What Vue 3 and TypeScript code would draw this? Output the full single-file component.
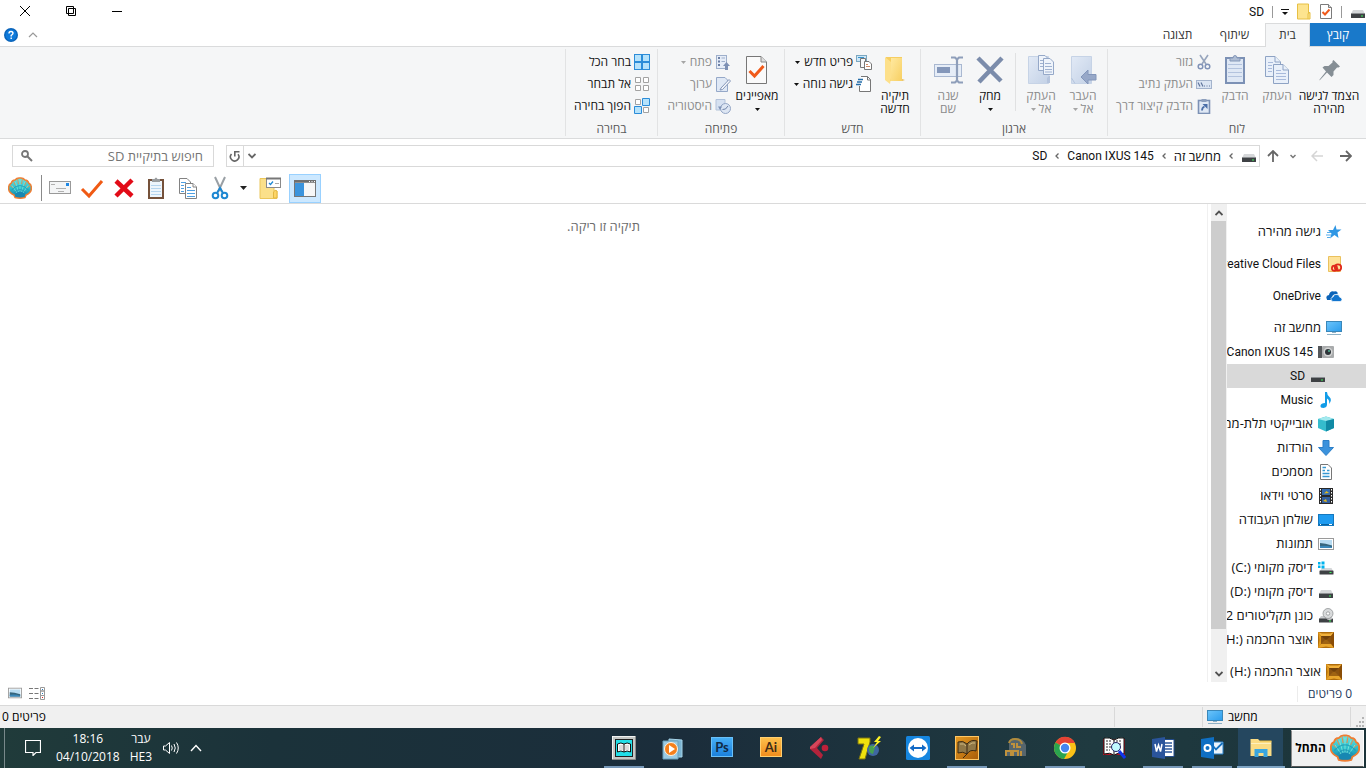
<script setup lang="ts">
import { ref } from 'vue'

interface Cmd {
  label: string
  icon: string
  disabled?: boolean
  arrow?: boolean
  lines?: string[]
  wide?: boolean
  sepAfter?: boolean
}
interface Group {
  name: string
  title: string
  big: Cmd[]
  small: Cmd[]
}

const groups: Group[] = [
  {
    name: 'clipboard',
    title: 'לוח',
    big: [
      { label: 'pin', icon: 'pin', lines: ['הצמד לגישה', 'מהירה'], wide: true },
      { label: 'copy', icon: 'copy-dim', lines: ['העתק'], disabled: true },
      { label: 'paste', icon: 'paste-dim', lines: ['הדבק'], disabled: true },
    ],
    small: [
      { label: 'גזור', icon: 'cut-dim', disabled: true },
      { label: 'העתק נתיב', icon: 'path', disabled: true },
      { label: 'הדבק קיצור דרך', icon: 'shortcut', disabled: true },
    ],
  },
  {
    name: 'organize',
    title: 'ארגון',
    big: [
      { label: 'move', icon: 'moveto', lines: ['העבר', 'אל'], disabled: true, arrow: true },
      { label: 'copyto', icon: 'copyto', lines: ['העתק', 'אל'], disabled: true, arrow: true, sepAfter: true },
      { label: 'delete', icon: 'delete', lines: ['מחק', ''], arrow: true },
      { label: 'rename', icon: 'rename', lines: ['שנה', 'שם'], disabled: true },
    ],
    small: [],
  },
  {
    name: 'new',
    title: 'חדש',
    big: [{ label: 'folder', icon: 'newfolder', lines: ['תיקיה', 'חדשה'] }],
    small: [
      { label: 'פריט חדש', icon: 'newitem', arrow: true },
      { label: 'גישה נוחה', icon: 'easy', arrow: true },
    ],
  },
  {
    name: 'open',
    title: 'פתיחה',
    big: [{ label: 'properties', icon: 'props', lines: ['מאפיינים', ''], arrow: true }],
    small: [
      { label: 'פתח', icon: 'open', disabled: true, arrow: true },
      { label: 'ערוך', icon: 'edit', disabled: true },
      { label: 'היסטוריה', icon: 'history', disabled: true },
    ],
  },
  {
    name: 'select',
    title: 'בחירה',
    big: [],
    small: [
      { label: 'בחר הכל', icon: 'selall' },
      { label: 'אל תבחר', icon: 'selnone' },
      { label: 'הפוך בחירה', icon: 'selinv' },
    ],
  },
]

const drive = (letter: string) => `\u200e(${letter}:)\u200e`

const tree = [
  { label: 'גישה מהירה', icon: 'star', level: 0 },
  { label: 'Creative Cloud Files', icon: 'ccfolder', level: 0, latin: true },
  { label: 'OneDrive', icon: 'onedrive', level: 0, latin: true },
  { label: 'מחשב זה', icon: 'pc', level: 0 },
  { label: 'Canon IXUS 145', icon: 'camera', level: 1, latin: true },
  { label: 'SD', icon: 'drive', level: 2, latin: true },
  { label: 'Music', icon: 'music', level: 1, latin: true },
  { label: 'אובייקטי תלת-ממד', icon: 'cube', level: 1 },
  { label: 'הורדות', icon: 'download', level: 1 },
  { label: 'מסמכים', icon: 'docs', level: 1 },
  { label: 'סרטי וידאו', icon: 'video', level: 1 },
  { label: 'שולחן העבודה', icon: 'desktop', level: 1 },
  { label: 'תמונות', icon: 'picture', level: 1 },
  { label: 'דיסק מקומי ' + drive('C'), icon: 'windrive', level: 1 },
  { label: 'דיסק מקומי ' + drive('D'), icon: 'drive', level: 1 },
  { label: 'כונן תקליטורים 2', icon: 'cd', level: 1 },
  { label: 'אוצר החכמה ' + drive('H'), icon: 'gem', level: 1 },
  { label: 'אוצר החכמה ' + drive('H'), icon: 'gem', level: 0 },
]
const selected = ref(5)

const tools = [
  { icon: 'mail', name: 'דואר' },
  { icon: 'check', name: 'מאפיינים' },
  { icon: 'redx', name: 'מחק' },
  { icon: 'paste', name: 'הדבק' },
  { icon: 'copy', name: 'העתק' },
  { icon: 'cut', name: 'גזור' },
]

const apps = [
  { icon: 'explorer', name: 'Explorer', open: true, active: true },
  { icon: 'outlook', name: 'Outlook', open: true },
  { icon: 'word', name: 'Word', open: true },
  { icon: 'findbook', name: 'חיפוש ספרים' },
  { icon: 'chrome', name: 'Chrome', open: true },
  { icon: 'arch', name: 'אוצר' },
  { icon: 'goldbook', name: 'ספר', open: true },
  { icon: 'teamviewer', name: 'TeamViewer' },
  { icon: 'seven', name: '7' },
  { icon: 'cubase', name: 'Cubase' },
  { icon: 'ai', name: 'Illustrator' },
  { icon: 'ps', name: 'Photoshop' },
  { icon: 'media', name: 'Media Player' },
  { icon: 'book', name: 'ספרייה', open: true },
]
const query = ref('')
</script>

<template>
  <div class="window" dir="rtl">
    <svg class="defs" width="0" height="0" aria-hidden="true">
      <defs>
        <linearGradient id="g-shell" x1="0" y1="0" x2="0" y2="1"><stop offset="0" stop-color="#6fe3e0" /><stop offset=".5" stop-color="#2cbfcb" /><stop offset="1" stop-color="#1279a8" /></linearGradient>
        <linearGradient id="g-fold" x1="0" y1="0" x2="1" y2="1"><stop offset="0" stop-color="#ffe9a0" /><stop offset="1" stop-color="#f7cf62" /></linearGradient>
        <linearGradient id="g-scr" x1="0" y1="0" x2="1" y2="1"><stop offset="0" stop-color="#6cc5fb" /><stop offset="1" stop-color="#2b9cec" /></linearGradient>
        <linearGradient id="g-dim" x1="0" y1="0" x2="1" y2="1"><stop offset="0" stop-color="#e2eaf6" /><stop offset="1" stop-color="#c3d1e6" /></linearGradient>
        <linearGradient id="g-ps" x1="0" y1="0" x2="0" y2="1"><stop offset="0" stop-color="#47b0f6" /><stop offset="1" stop-color="#1a7fdc" /></linearGradient>
        <linearGradient id="g-ai" x1="0" y1="0" x2="0" y2="1"><stop offset="0" stop-color="#fdc04c" /><stop offset="1" stop-color="#f08c1c" /></linearGradient>
        <linearGradient id="g-gold" x1="0" y1="0" x2="1" y2="1"><stop offset="0" stop-color="#e59a22" /><stop offset="1" stop-color="#a85c08" /></linearGradient>
      </defs>
      <symbol id="i-shell" viewBox="0 0 24 22">
        <path d="M6 18Q0 15 .8 11Q.3 7.500 3.200 6.300Q4 3 7 3Q9 .5 12 1Q15 .5 17 3Q20 3 20.800 6.300Q23.700 7.500 23.200 11Q24 15 18 18L17 20.500Q12 22 7 20.500Z" fill="url(#g-shell)" stroke="#ee7d32" stroke-width="1.500" />
        <path d="M9.500 1.500L10.500 7M14.500 1.500L13.500 7M5 3.500L7.500 8.500M19 3.500L16.500 8.500M1.500 8L5.500 11M22.500 8L18.500 11" stroke="#f08a44" stroke-width=".8" fill="none" />
        <path d="M12 15V3M10.500 15L7.500 5M13.500 15L16.500 5M9 16L4 8.500M15 16L20 8.500" stroke="#8cebe0" stroke-width=".6" fill="none" />
        <path d="M3.500 13Q12 4 20.500 13M6 16Q12 9 18 16" stroke="#1b93b0" fill="none" opacity=".7" />
        <path d="M7 17Q12 12 17 17L16 20H8Z" fill="#1787b2" />
      </symbol>
      <symbol id="i-drive" viewBox="0 0 16 16"><path d="M3 6H13L15 10H1Z" fill="#d5d7d9" /><rect x="1" y="9.500" width="14" height="4.500" rx=".6" fill="#3e4144" /><path d="M1 9.500H15" stroke="#8d9093" /><rect x="11" y="11.500" width="2" height="1" fill="#3df25a" /></symbol>
      <symbol id="i-windrive" viewBox="0 0 16 16"><path d="M4 8H13.500L15 11H2Z" fill="#d5d7d9" /><rect x="1.500" y="10.500" width="14" height="4" rx=".6" fill="#3e4144" /><rect x="11.500" y="12" width="2" height="1" fill="#3df25a" /><path d="M0 2H2.500V4.500H0ZM3.500 1.500H6.500V4.500H3.500ZM0 5.500H2.500V8H0ZM3.500 5.500H6.500V8.500H3.500Z" fill="#00b3ee" /></symbol>
      <symbol id="i-cd" viewBox="0 0 16 16"><path d="M3 8H13L15 11H1Z" fill="#c9cbcd" /><circle cx="10" cy="5.500" r="5" fill="#d9dbdc" stroke="#85888a" stroke-width=".7" /><circle cx="10" cy="5.500" r="1.700" fill="#fff" stroke="#85888a" stroke-width=".7" /><path d="M1 10.500H8Q11 13 15 10.500V14.500H1Z" fill="#3e4144" /><rect x="11" y="12.500" width="2" height="1" fill="#3df25a" /></symbol>
      <symbol id="i-qdoc" viewBox="0 0 14 17"><path d="M1.500 1.500H9.500L12.500 4.500V15.500H1.500Z" fill="#fff" stroke="#7b7b7b" /><path d="M9.500 1.500V4.500H12.500" fill="#ddd" stroke="#7b7b7b" /><path d="M3.500 9L6 11.500L10.500 6.500" fill="none" stroke="#f05a1a" stroke-width="2" /></symbol>
      <symbol id="i-qfolder" viewBox="0 0 14 17"><path d="M.5 1H11.500V10L13 9.500V16H.5Z" fill="#fde48f" stroke="#e7c044" /><path d="M11 16V11Q11 9.500 13 9.500" fill="none" stroke="#e7c044" /></symbol>
      <symbol id="i-pin" viewBox="0 0 32 32"><path d="M20.500 6L27 12.500L25.500 13.500L24 13.500L20.500 17.500L20.500 21L18.500 23L14 18.500L7.500 25.500L6 26.500L7 25L13 17.500L9.500 13.500L11.500 12L15.500 12L19.500 8.500L19.500 7Z" fill="#858e95" /></symbol>
      <symbol id="i-copy-dim" viewBox="0 0 32 32"><g stroke="#8ea3c4" fill="#e9f0fa"><path d="M4.500 2.500H14L19.500 8V22.500H4.500Z" /><path d="M14 2.500V8H19.500" /><path d="M12.500 10.500H22L27.500 16V29.500H12.500Z" /><path d="M22 10.500V16H27.500" /></g><path d="M7 8.500H12M7 11.500H11M7 14.500H11M7 17.500H11M15 16.500H20M15 19.500H25M15 22.500H25M15 25.500H25" stroke="#a8badb" /></symbol>
      <symbol id="i-paste-dim" viewBox="0 0 32 32"><rect x="7" y="4" width="18" height="25" fill="#dfe8f5" stroke="#7c91b5" stroke-width="2" /><path d="M9 10.500H23M9 14.500H23M9 18.500H23M9 22.500H23" stroke="#b3c3de" /><path d="M11 4H14Q14 1.500 16 1.500T18 4H21V7H11Z" fill="#aebdd4" stroke="#8497b8" /></symbol>
      <symbol id="i-cut-dim" viewBox="0 0 16 16"><path d="M4 1L10 10M12 1L6 10" stroke="#97a5bd" stroke-width="1.600" /><circle cx="4.500" cy="12.500" r="2.300" fill="none" stroke="#8093b8" stroke-width="1.500" /><circle cx="11.500" cy="12.500" r="2.300" fill="none" stroke="#8093b8" stroke-width="1.500" /></symbol>
      <symbol id="i-path" viewBox="0 0 16 16"><rect x=".5" y="4.500" width="15" height="8" fill="#dbe5f3" stroke="#a3b3cc" /><path d="M2 6.500L4 10.500M5 6.500L7 10.500" stroke="#5f759c" stroke-width="1.200" /><path d="M8 10H9M10.500 10H11.500M13 10H14" stroke="#5f759c" /></symbol>
      <symbol id="i-shortcut" viewBox="0 0 16 16"><rect x="2.500" y="2.500" width="11" height="13" fill="#dfe8f5" stroke="#7c91b5" stroke-width="1.600" /><path d="M5.500 1H10.500V4H5.500Z" fill="#8d9fbd" /><path d="M6 12.500Q6 9.500 8.500 8.500" fill="none" stroke="#4a6ea8" stroke-width="1.800" /><path d="M6.500 6H11.500V11Z" fill="#4a6ea8" /></symbol>
      <symbol id="i-moveto" viewBox="0 0 32 32"><path d="M4.500 2.500H24.500V29.500H4.500Z" fill="url(#g-dim)" stroke="#c6d3e6" /><path d="M4.500 24L8 29.500" stroke="#b3c3dc" /><path d="M14 23L21 16V20.500H29V26H21V30Z" fill="#97a8c8" stroke="#8396ba" /></symbol>
      <symbol id="i-copyto" viewBox="0 0 32 32"><path d="M3.500 2.500H23.500V29.500H3.500Z" fill="url(#g-dim)" stroke="#c6d3e6" /><g fill="#eff4fb" stroke="#95a8c8"><path d="M13.500 1.500H20L23.500 5V16.500H13.500Z" /><path d="M18.500 4.500H25L28.500 8V20.500H18.500Z" /></g><path d="M15 6.500H18M15 9.500H18M15 12.500H18M20 9.500H26M20 12.500H27M20 15.500H27M20 18H27" stroke="#9fb1d0" /><path d="M22 24L25 21V29H22Z" fill="#b5c4dd" /></symbol>
      <symbol id="i-delete" viewBox="0 0 32 32"><path d="M4 4L27 27M28 4L5 28" stroke="#7b8cab" stroke-width="4.500" /></symbol>
      <symbol id="i-rename" viewBox="0 0 32 32"><rect x="2.500" y="10.500" width="27" height="12" fill="#e6edf7" stroke="#a9b8d1" /><rect x="5" y="13" width="13" height="6" fill="#8497ba" /><path d="M19 3.500H23L25 5.500V26.500L23 28.500H19M31 3.500H27L25 5.500M25 26.500L27 28.500H31" fill="none" stroke="#8e9eba" stroke-width="2.200" /></symbol>
      <symbol id="i-newfolder" viewBox="0 0 32 32"><path d="M7 3H23V27H7Z" fill="#f6ce62" /><path d="M12 4H23V27H12Z" fill="url(#g-fold)" /><path d="M6 3L12 8V24L11 30L6 26Z" fill="#fde08a" /><path d="M23 27L26 26L23 25Z" fill="#e8bd58" /></symbol>
      <symbol id="i-newitem" viewBox="0 0 16 16"><rect x=".5" y="1.500" width="10" height="6" fill="#cde7f8" stroke="#7ba7c0" /><path d="M2 3.500H8" stroke="#3893cc" /><path d="M4.500 4.500H9.500V13.500H4.500Z" fill="#f7f8f9" stroke="#777" /><path d="M8.500 7.500H13L15.500 10V15.500H8.500Z" fill="#fff" stroke="#777" /><path d="M10 10.500H12M10 12.500H14" stroke="#d18b67" /></symbol>
      <symbol id="i-easy" viewBox="0 0 16 16"><path d="M5 .5H11.500L14.500 3.500V15.500H3.500V10" fill="#fff" stroke="#777" /><path d="M11.500 .5V4H14.500" fill="none" stroke="#777" /><path d="M2 3.500H7M1 6H6M0 8.500H5" stroke="#256da9" stroke-width="1.400" /></symbol>
      <symbol id="i-props" viewBox="0 0 32 32"><path d="M5.500 2.500H20L25.500 8V29.500H5.500Z" fill="#fafafa" stroke="#777" /><path d="M20 2.500V8H25.500" fill="#ddd" stroke="#888" /><path d="M8.500 17L13.500 22L22.500 12" fill="none" stroke="#f05a1a" stroke-width="3" /></symbol>
      <symbol id="i-open" viewBox="0 0 16 16"><rect x="1.500" y="1.500" width="10" height="13" fill="#e6edf8" stroke="#9eafcb" /><path d="M3 4H5M3 7.500H5M3 11H5" stroke="#6c80a5" stroke-width="2" /><path d="M6.500 4H10M6.500 7.500H10" stroke="#9eafcb" /><path d="M8 12L11.500 8L15 12H13V16H10V12Z" fill="#7d90b4" /></symbol>
      <symbol id="i-edit" viewBox="0 0 16 16"><path d="M1.500 1.500H10L12.500 4V15.500H1.500Z" fill="#dfe8f5" stroke="#95a8c8" /><path d="M6 12L14 3.500L15.500 5L7.500 13.500L5 14Z" fill="#f5f7fb" stroke="#8496b8" /></symbol>
      <symbol id="i-history" viewBox="0 0 16 16"><path d="M1 1.500H10V12H1Z" fill="#d6e1f1" stroke="#b4c3da" /><circle cx="10.500" cy="10.500" r="5" fill="#dde6f3" stroke="#93a5c4" /><path d="M7.500 11.500L10.500 11L13 8" stroke="#6f83a8" fill="none" /><path d="M3 8.500H7L5 12Z" fill="#7f93b7" /></symbol>
      <symbol id="i-selall" viewBox="0 0 16 16"><rect width="16" height="16" fill="#2b8cd8" /><path d="M1 1H7V7H1ZM9 1H15V7H9ZM1 9H7V15H1ZM9 9H15V15H9Z" fill="#b5e2fb" /></symbol>
      <symbol id="i-selnone" viewBox="0 0 16 16"><path d="M1.500 1.500H6.500V6.500H1.500ZM9.500 1.500H14.500V6.500H9.500ZM1.500 9.500H6.500V14.500H1.500ZM9.500 9.500H14.500V14.500H9.500Z" fill="#fff" stroke="#a2a2a2" /></symbol>
      <symbol id="i-selinv" viewBox="0 0 16 16"><path d="M1.500 1.500H6.500V6.500H1.500ZM9.500 9.500H14.500V14.500H9.500Z" fill="#fff" stroke="#a2a2a2" /><path d="M8.500 .5H15.500V7.500H8.500ZM.5 8.500H7.500V15.500H.5Z" fill="#b5e2fb" stroke="#2b8cd8" /></symbol>
      <symbol id="i-mail" viewBox="0 0 24 24"><rect x="1.500" y="5.500" width="21" height="12" fill="#f4f5f6" stroke="#999" /><rect x="18" y="7" width="3" height="3" fill="#1e88e5" /><path d="M3 8.500H7M8 12.500H18M10 15.500H16" stroke="#b0b0b0" /></symbol>
      <symbol id="i-check" viewBox="0 0 24 24"><path d="M2 13L9 20L22 5" fill="none" stroke="#f05a14" stroke-width="3" /></symbol>
      <symbol id="i-redx" viewBox="0 0 24 24"><path d="M4 5L20 20M20 4L4 20" stroke="#e20b17" stroke-width="4.500" /></symbol>
      <symbol id="i-paste" viewBox="0 0 24 24"><rect x="5" y="4" width="14" height="18" fill="#eef5fb" stroke="#75513a" stroke-width="2" /><path d="M7 9.500H17M7 12.500H17M7 15.500H17M7 18.500H17" stroke="#b6d5ee" /><path d="M8 3H10.500Q12 0 13.500 3H16V6H8Z" fill="#9a9d9f" /></symbol>
      <symbol id="i-copy" viewBox="0 0 24 24"><g fill="#fff" stroke="#828282"><path d="M3.500 2.500H11L14.500 6V17.500H3.500Z" /><path d="M9.500 7.500H17L20.500 11V22.500H9.500Z" /><path d="M17 7.500V11H20.500" /></g><path d="M5 6.500H10M5 9.500H8M5 12.500H8M5 15.500H8M11 11.500H15M11 14.500H19M11 17.500H19M11 20.500H19" stroke="#4fa0e2" /></symbol>
      <symbol id="i-cut" viewBox="0 0 24 24"><path d="M7 1L14 16M17 1L10 16" stroke="#9aa0a5" stroke-width="2" /><circle cx="7.500" cy="19.500" r="2.800" fill="none" stroke="#1e88d2" stroke-width="2" /><circle cx="16.500" cy="19.500" r="2.800" fill="none" stroke="#1e88d2" stroke-width="2" /><path d="M9 17L12 12L15 17" stroke="#1e88d2" stroke-width="2" fill="none" /></symbol>
      <symbol id="i-optfolder" viewBox="0 0 24 24"><path d="M2 2.500H16V15H19V22.500H2Z" fill="#fbe08a" stroke="#ebc65a" /><path d="M15.500 22V16Q17 13 19 15V22Z" fill="#fdd566" stroke="#e2b741" /><rect x="8.500" y="2.500" width="14" height="9" fill="#fff" stroke="#8a8a8a" /><path d="M8 2.500H23" stroke="#777" stroke-width="2" /><path d="M11 7L12.500 8.500L15 5.500" stroke="#1e88d2" fill="none" stroke-width="1.300" /><path d="M17 7.500H21" stroke="#aaa" /></symbol>
      <symbol id="i-pane" viewBox="0 0 24 24"><rect x="1.500" y="4.500" width="21" height="16" fill="#f7f7f7" stroke="#777" /><path d="M1 5.500H23" stroke="#6e6e6e" stroke-width="2.500" /><rect x="2" y="7" width="9" height="13" fill="#3b94dd" /><path d="M16 5.500H17M18.500 5.500H19.500M21 5.500H22" stroke="#fff" /></symbol>
      <symbol id="i-star" viewBox="0 0 16 16"><path d="M9.500 1L10.500 5.500H15.500L11.500 8.500L12.500 14L8.500 11L4 14.500L5.500 9.500L2 6H7Z" fill="#2f96e4" /><path d="M1 8.500H5M0 11H5M1 13.500H4" stroke="#54acea" /></symbol>
      <symbol id="i-ccfolder" viewBox="0 0 16 16"><path d="M2.500 .5H14.500V15.500H2.500Z" fill="#fee39a" stroke="#eac15d" /><circle cx="8.500" cy="12.300" r="2.600" fill="#fee39a" stroke="#e0281a" stroke-width="1.700" /><circle cx="12" cy="11.500" r="3.200" fill="none" stroke="#e0281a" stroke-width="1.700" /><path d="M8 11L12.500 13.500" stroke="#e0281a" stroke-width="1.400" /></symbol>
      <symbol id="i-onedrive" viewBox="0 0 16 16"><path d="M1 11.500Q-1 7.500 3 7Q4 2.500 8 3.500Q11 2.500 12 5.500L7 7L5 12H1Z" fill="#0b63b8" /><path d="M7 13.500Q4.500 13 5 10.500Q5.500 9 7 9Q8 5.500 11 6.500Q13.500 6.500 13.500 9Q16 9.500 16 11.500T14 13.500Z" fill="#1275ce" stroke="#fff" stroke-width=".7" /></symbol>
      <symbol id="i-pc" viewBox="0 0 16 16"><rect x=".5" y="1.500" width="15" height="10" fill="url(#g-scr)" stroke="#3a87b9" /><path d="M6 12.500H10M1 14.500H15" stroke="#8fb2c7" /></symbol>
      <symbol id="i-camera" viewBox="0 0 16 16"><rect y="2" width="4" height="12" fill="#54575a" /><rect x="4" y="2" width="12" height="12" rx="1" fill="#a9abac" /><circle cx="10" cy="8" r="4.500" fill="#d4d5d5" /><circle cx="10" cy="8" r="3" fill="#2d3439" /><circle cx="11" cy="7" r="1" fill="#53b596" /></symbol>
      <symbol id="i-music" viewBox="0 0 16 16"><path d="M7 0H9Q9 3 11.500 5Q14.500 8 11 12Q12 8 9 6.500V12.500Q9 15.500 5.500 16Q2 16 2.500 13.500Q3 11 7 11Z" fill="#119ce8" /></symbol>
      <symbol id="i-cube" viewBox="0 0 16 16"><path d="M0 3L8 0.500L16 3V12L8 15.500L0 12Z" fill="#35bccd" /><path d="M0 3L8 .5L16 3L8 5Z" fill="#a3e9ee" /><path d="M8 5L16 3V12L8 15.500Z" fill="#118aa5" /></symbol>
      <symbol id="i-download" viewBox="0 0 16 16"><path d="M5 .5H11V7.500H15.500L8 15.500L.5 7.500H5Z" fill="#3b92dc" stroke="#2c7fc8" /></symbol>
      <symbol id="i-docs" viewBox="0 0 16 16"><path d="M2.500 .5H10L13.500 4V15.500H2.500Z" fill="#fff" stroke="#777" /><path d="M4.500 3.500H8M4.500 6.500H7M9 6.500H11.500M4.500 9.500H11.500M4.500 12.500H11.500" stroke="#3697d1" stroke-width="1.300" /></symbol>
      <symbol id="i-video" viewBox="0 0 16 16"><rect x="1" width="14" height="16" fill="#292929" /><path d="M2.500 1V16M13.500 1V16" stroke="#fff" stroke-dasharray="1.500 1.500" /><rect x="4" y="1" width="8" height="6" fill="#356bae" /><rect x="4" y="9" width="8" height="6" fill="#325e9e" /><path d="M6 5.500L8.500 3L11 5ZM5 13L8 11L9 14Z" fill="#e3b81a" /></symbol>
      <symbol id="i-desktop" viewBox="0 0 16 16"><rect x=".5" y="2.500" width="15" height="11" fill="#1e9bf0" stroke="#1578be" /><path d="M1 12.500H15" stroke="#08639f" /><path d="M2 12.500H3M11 12.500H14" stroke="#fff" /></symbol>
      <symbol id="i-picture" viewBox="0 0 16 16"><rect x=".5" y="2.500" width="15" height="11" fill="#fff" stroke="#9a9a9a" /><rect x="2" y="4" width="12" height="8" fill="#b8dcf2" /><path d="M2 7Q7 7 14 9.500V12H2Z" fill="#36657c" /><path d="M2 10Q8 9 14 11V12H2Z" fill="#3a87b9" /></symbol>
      <symbol id="i-gem" viewBox="0 0 16 16"><rect width="16" height="16" fill="#b06c0a" /><path d="M0 0L3 4H13L16 0L12 1.500H4Z" fill="#f2b23c" /><path d="M0 0L3 4V12L0 16L1.500 8Z" fill="#e09a1e" /><path d="M16 0L13 4V12L16 16Z" fill="#8a4d06" /><path d="M0 16L3 12H13L16 16L8 14.500Z" fill="#e8a52c" /><rect x="3" y="4" width="10" height="8" fill="#8a5210" /><path d="M3 12L8 7L13 12Z" fill="#9f6312" /><path d="M3 4L8 8L13 4Z" fill="#70400a" /></symbol>
      <symbol id="i-details" viewBox="0 0 16 16"><path d="M0 3.500H4M5.500 3.500H9.500M0 8.500H4M5.500 8.500H9.500M0 13.500H4M5.500 13.500H9.500" stroke="#777" /><path d="M11.500 2.500H15.500V6H11.500ZM11.500 6H15.500V10.500H11.500ZM11.500 10.500H15.500V14.500H11.500Z" fill="#fff" stroke="#999" /><path d="M13 4.500H14M13 8.500H14" stroke="#2878b7" /><path d="M13 12.500H14" stroke="#d22" /></symbol>
      <symbol id="i-explorer" viewBox="0 0 24 24"><path d="M1.500 3H9L11 5H22.500V20H1.500Z" fill="#fbdc84" /><path d="M11 5H22.500" stroke="#e8b93c" /><path d="M2 7.500H22" stroke="#fff0bc" /><path d="M5.500 13H18.500V21H14.500V17H9.500V21H5.500Z" fill="#3aa6df" /></symbol>
      <symbol id="i-outlook" viewBox="0 0 24 24"><path d="M12 6H23V18H12Z" fill="#eaf4fc" stroke="#2b82cb" /><path d="M13 10L16 13.500L22.500 7" fill="none" stroke="#1470be" stroke-width="1.800" /><path d="M1 3L14 1V23L1 21Z" fill="#0f6fc3" /><circle cx="7.500" cy="12" r="3" fill="none" stroke="#fff" stroke-width="2" /></symbol>
      <symbol id="i-word" viewBox="0 0 24 24"><path d="M12 3.500H23V20.500H12Z" fill="#fff" stroke="#244d8c" /><path d="M14 7H21M14 10H21M14 13H21M14 16H21" stroke="#2b579a" stroke-width="1.500" /><path d="M1 3L14 1V23L1 21Z" fill="#2a549b" /><path d="M4 8L5.500 15.500L7.500 9L9.500 15.500L11 8" fill="none" stroke="#fff" stroke-width="1.500" /></symbol>
      <symbol id="i-findbook" viewBox="0 0 24 24"><path d="M1 3H23V19H1Z" fill="#b51425" /><path d="M2 2Q8 1 12 4Q16 1 22 2V18Q16 16 12 19Q8 16 2 18Z" fill="#fff" stroke="#111" /><path d="M12 4V18" stroke="#111" /><path d="M4 5H10M4 8H9M4 11H10M4 14H8M14 5H20M14 8H20" stroke="#333" stroke-dasharray="2 1" /><circle cx="14" cy="11" r="4.500" fill="#c0faff" stroke="#226" /><path d="M17 15L23 22" stroke="#1236ee" stroke-width="3" /></symbol>
      <symbol id="i-chrome" viewBox="0 0 24 24"><circle cx="12" cy="12" r="11" fill="#fbc116" /><path d="M12 12L2.500 6.500A11 11 0 0 1 22 7H12Z" fill="#e44335" /><path d="M2.500 6.500A11 11 0 0 0 11 23L16 14Z" fill="#2aa44f" /><circle cx="12" cy="12" r="5.500" fill="#fff" /><circle cx="12" cy="12" r="4.200" fill="#4586ee" /></symbol>
      <symbol id="i-arch" viewBox="0 0 24 24"><path d="M5 8Q5 2 12 2T22 9V20H2V14H5Z" fill="#56656c" /><path d="M5 7Q6 3 11 3Q17 3 18 8" fill="none" stroke="#b08b3c" stroke-width="2" /><path d="M7 8H10V12M13 7V11H17M2 20V15H7V20M9 20V15H14V20M17 20V15" fill="none" stroke="#c0913c" stroke-width="2" /></symbol>
      <symbol id="i-goldbook" viewBox="0 0 24 24"><rect x=".5" y=".5" width="23" height="23" fill="url(#g-gold)" stroke="#ffc765" /><path d="M3 6Q8 4 12 8Q16 3 22 5L21 15Q15 13 12 18Q8 15 3 17Z" fill="#8f7747" stroke="#3c2a12" /><path d="M12 8V18L8 22" stroke="#392712" fill="none" /><path d="M5 8Q9 7 11 10M14 9Q17 6 20 7" stroke="#d1ba80" fill="none" /></symbol>
      <symbol id="i-teamviewer" viewBox="0 0 24 24"><rect width="24" height="24" rx="1.500" fill="#1686df" /><circle cx="12" cy="12" r="10" fill="#fff" /><path d="M3.500 12L8 8.500V11H16V8.500L20.500 12L16 15.500V13H8V15.500Z" fill="#1269c5" /></symbol>
      <symbol id="i-seven" viewBox="0 0 24 24"><path d="M1 2H13V6L8 23H2L7 8H1Z" fill="#efe20d" stroke="#7e7511" /><circle cx="16" cy="14" r="6" fill="#3f67a1" /><path d="M12 11Q15 8 18 11L16 18Q11 17 12 11Z" fill="#46a052" /><path d="M22 0L17 6H20L16 12L24 5H21L24 1Z" fill="#fff326" /></symbol>
      <symbol id="i-cubase" viewBox="0 0 24 24"><path d="M13 1L16 4L9 12L15 19L13 23L2 13V11Z" fill="#b3233b" /><path d="M13 1L2 11V13L7 12L14 4Z" fill="#d6465a" /><circle cx="17" cy="12" r="3.300" fill="#be203a" /></symbol>
      <symbol id="i-ai" viewBox="0 0 24 24"><rect x="1.500" y="1.500" width="21" height="19" fill="url(#g-ai)" stroke="#ffcf70" /><text x="12" y="16" text-anchor="middle" font-family="Lato, sans-serif" font-size="13" font-weight="700" fill="#3e2b16">Ai</text></symbol>
      <symbol id="i-ps" viewBox="0 0 24 24"><rect x="1.500" y="1.500" width="21" height="19" fill="url(#g-ps)" stroke="#69c0f8" /><text x="12" y="16" text-anchor="middle" font-family="Lato, sans-serif" font-size="13" font-weight="700" fill="#102a46">Ps</text></symbol>
      <symbol id="i-media" viewBox="0 0 24 24"><path d="M8 3L21 4V21H8Z" fill="#7cb4d2" stroke="#a6d4e9" /><path d="M2 5H17V23H2Z" fill="#9ccbe3" stroke="#6ba2bd" /><circle cx="10" cy="13" r="6.500" fill="#f5801c" stroke="#fff3df" /><path d="M8 9L14 13L8 17Z" fill="#fff" /></symbol>
      <symbol id="i-book" viewBox="0 0 24 24"><rect width="24" height="24" fill="#c5c8c6" /><path d="M0 24V0H24" fill="none" stroke="#fff" stroke-width="1.500" /><path d="M24 0V24H0" fill="none" stroke="#777" stroke-width="1.500" /><rect x="3.500" y="3.500" width="17" height="17" fill="#22dfe8" stroke="#222" /><path d="M5.500 8Q9 6 12 8Q15 6 18.500 8V16Q15 14 12 16Q9 14 5.500 16Z" fill="#fff" stroke="#111" /><path d="M12 8V16" stroke="#111" /><path d="M8 9V14M10 9V14M14 9V14M16 9V14" stroke="#aaa" stroke-width=".8" /></symbol>
    </svg>

    <header class="titlebar">
      <div class="quick">
        <svg class="ic16"><use href="#i-drive" /></svg>
        <i class="bar"></i>
        <button aria-label="מאפיינים"><svg width="14" height="17"><use href="#i-qdoc" /></svg></button>
        <button aria-label="תיקיה חדשה"><svg width="14" height="17"><use href="#i-qfolder" /></svg></button>
        <button aria-label="התאמה אישית"><svg width="8" height="8"><path d="M1 4H7L4 7Z" fill="#111" /><path d="M0 1.500H8" stroke="#111" /></svg></button>
        <i class="bar"></i>
        <span class="latin">SD</span>
      </div>
      <div class="winctl">
        <button aria-label="מזער"><svg width="10" height="10"><path d="M0 5.500H10" stroke="#000" /></svg></button>
        <button aria-label="שחזר"><svg width="10" height="10"><path d="M.5 .5H7.500V7.500H.5ZM2.500 2.500H9.500V9.500H2.500Z" fill="#fff" stroke="#000" /></svg></button>
        <button aria-label="סגור"><svg width="10" height="10"><path d="M0 0L10 10M10 0L0 10" stroke="#000" /></svg></button>
      </div>
    </header>

    <nav class="tabs">
      <button class="tab file">קובץ</button>
      <button class="tab home">בית</button>
      <button class="tab">שיתוף</button>
      <button class="tab">תצוגה</button>
      <span class="grow"></span>
      <button class="mini" aria-label="מזער רצועת כלים"><svg width="10" height="6"><path d="M1 5L5 1L9 5" fill="none" stroke="#999" stroke-width="1.200" /></svg></button>
      <button class="mini" aria-label="עזרה"><svg width="14" height="14" viewBox="0 0 14 14"><circle cx="7" cy="7" r="7" fill="#0a64ba" /><circle cx="7" cy="7" r="5.500" fill="#0e7adb" /><path d="M5 5.500Q5 3.500 7 3.500T9 5.300Q9 6.300 7.200 7.300V8.500M7.200 9.500V11" stroke="#fff" stroke-width="1.400" fill="none" /></svg></button>
    </nav>

    <section class="ribbon" aria-label="רצועת כלים">
      <div v-for="g in groups" :key="g.name" class="group" :class="'g-' + g.name">
        <div class="cmds">
          <template v-for="b in g.big" :key="b.icon">
            <button class="big" :class="{ wide: b.wide, off: b.disabled }">
              <svg class="ic32"><use :href="'#i-' + b.icon" /></svg>
              <span class="lines">{{ b.lines?.join('\n') }}<svg v-if="b.arrow" class="caret" :class="{ gap: b.lines?.[1] }" width="5" height="3"><path d="M0 0H5L2.500 3Z" fill="currentColor" /></svg></span>
            </button>
            <i v-if="b.sepAfter" class="divider"></i>
          </template>
          <div v-if="g.small.length" class="smalls">
            <button v-for="s in g.small" :key="s.icon" class="small" :class="{ off: s.disabled }">
              <svg class="ic16"><use :href="'#i-' + s.icon" /></svg>
              <span>{{ s.label }}</span>
              <svg v-if="s.arrow" class="caret" width="5" height="3"><path d="M0 0H5L2.500 3Z" fill="currentColor" /></svg>
            </button>
          </div>
        </div>
        <div class="gtitle">{{ g.title }}</div>
      </div>
    </section>

    <section class="addressrow">
      <button class="nb" aria-label="אחורה"><svg width="12" height="12"><path d="M0 6H11M6 1L11 6L6 11" fill="none" stroke="#666" stroke-width="1.800" /></svg></button>
      <button class="nb fwd" aria-label="קדימה"><svg width="12" height="12"><path d="M12 6H1M6 1L1 6L6 11" fill="none" stroke="#d5d5d5" stroke-width="1.500" /></svg></button>
      <button class="nb recent" aria-label="מיקומים אחרונים"><svg width="6" height="5"><path d="M.5 1L3 3.500L5.500 1" fill="none" stroke="#777" stroke-width="1.500" /></svg></button>
      <button class="nb up" aria-label="למעלה"><svg width="12" height="12"><path d="M6 12V1M1 6L6 1L11 6" fill="none" stroke="#666" stroke-width="1.800" /></svg></button>
      <div class="address">
        <svg class="ic16"><use href="#i-drive" /></svg>
        <svg class="chev" width="4" height="6"><path d="M3.500 .5L1 3L3.500 5.500" /></svg>
        <a href="#">מחשב זה</a>
        <svg class="chev" width="4" height="6"><path d="M3.500 .5L1 3L3.500 5.500" /></svg>
        <a href="#" class="latin">Canon IXUS 145</a>
        <svg class="chev" width="4" height="6"><path d="M3.500 .5L1 3L3.500 5.500" /></svg>
        <a href="#" class="latin">SD</a>
        <span class="grow"></span>
        <button class="ab" aria-label="מיקומים קודמים"><svg width="8" height="6"><path d="M.5 1L4 4.500L7.500 1" fill="none" stroke="#666" stroke-width="1.800" /></svg></button>
        <button class="ab refresh" aria-label="רענן"><svg width="12" height="12"><path d="M2.500 4A4.200 4.200 0 1 0 9 4.200M5.800 6.500V1.800H10.500" fill="none" stroke="#666" stroke-width="1.600" /></svg></button>
      </div>
      <div class="search">
        <input v-model="query" type="text" placeholder="חיפוש בתיקיית SD" aria-label="חיפוש בתיקיית SD" />
        <svg width="12" height="12"><circle cx="4" cy="4" r="3" fill="none" stroke="#777" stroke-width="1.800" /><path d="M6 6L11 11" stroke="#777" stroke-width="2" /></svg>
      </div>
    </section>

    <section class="toolbar" dir="ltr" aria-label="סרגל כלים">
      <button class="tb" aria-label="Classic Shell"><svg width="24" height="22"><use href="#i-shell" /></svg></button>
      <i class="tsep"></i>
      <button v-for="t in tools" :key="t.icon" class="tb" :aria-label="t.name"><svg width="24" height="24"><use :href="'#i-' + t.icon" /></svg></button>
      <button class="tarrow" aria-label="עוד"><svg width="7" height="4"><path d="M0 0H7L3.500 4Z" fill="#222" /></svg></button>
      <button class="tb" aria-label="אפשרויות תיקיה"><svg width="24" height="24"><use href="#i-optfolder" /></svg></button>
      <button class="tb on" aria-label="חלונית ניווט"><svg width="24" height="24"><use href="#i-pane" /></svg></button>
    </section>

    <main class="main">
      <nav class="tree" aria-label="חלונית ניווט">
        <button
          v-for="(n, i) in tree"
          :key="i"
          class="node"
          :class="['lv' + n.level, { sel: i === selected }]"
          @click="selected = i"
        >
          <svg class="ic16"><use :href="'#i-' + n.icon" /></svg>
          <span :class="n.latin ? 'latin' : 'heb'">{{ n.label }}</span>
        </button>
      </nav>
      <div class="scroll" aria-hidden="true">
        <span class="sarrow"><svg width="8" height="6"><path d="M.5 5L4 1.500L7.500 5" fill="none" stroke="#505050" stroke-width="1.800" /></svg></span>
        <span class="track"><span class="thumb"></span></span>
        <span class="sarrow"><svg width="8" height="6"><path d="M.5 1L4 4.500L7.500 1" fill="none" stroke="#505050" stroke-width="1.800" /></svg></span>
      </div>
      <div class="content">תיקיה זו ריקה.</div>
    </main>

    <div class="info">
      <span class="count">0 פריטים</span>
      <span class="grow"></span>
      <button aria-label="פרטים"><svg class="ic16"><use href="#i-details" /></svg></button>
      <button aria-label="תמונות ממוזערות"><svg width="14" height="16"><use href="#i-picture" /></svg></button>
    </div>

    <footer class="status">
      <span class="grip"><svg width="10" height="10"><path d="M8 0V10M5 4V10M2 8V10" stroke="#b5b5b5" stroke-width="2" stroke-dasharray="2 2" /></svg></span>
      <span class="cell pc">מחשב<svg class="ic16"><use href="#i-pc" /></svg></span>
      <span class="cell empty"></span>
      <span class="grow"></span>
      <span>פריטים 0</span>
    </footer>

    <footer class="taskbar">
      <button class="start"><svg width="30" height="28"><use href="#i-shell" /></svg>התחל</button>
      <div class="apps">
        <button v-for="a in apps" :key="a.icon" class="app" :class="{ open: a.open, active: a.active }" :aria-label="a.name">
          <svg width="24" height="24"><use :href="'#i-' + a.icon" /></svg>
        </button>
      </div>
      <span class="grow"></span>
      <button class="tray" aria-label="הצג סמלים מוסתרים"><svg width="12" height="8"><path d="M1 7L6 1.500L11 7" fill="none" stroke="#fff" stroke-width="1.400" /></svg></button>
      <button class="tray" aria-label="עוצמת קול"><svg width="18" height="14"><path d="M1.500 5V9H3.500L7.500 12.500V1.500L3.500 5Z" fill="none" stroke="#fff" /><path d="M9.500 4.500Q11 7 9.500 9.500M12 3Q14.500 7 12 11M14.500 1.500Q18 7 14.500 12.500" fill="none" stroke="#fff" /></svg></button>
      <button class="two lang">עבר<br />HE3</button>
      <button class="two clock">18:16<br />04/10/2018</button>
      <button class="tray note" aria-label="התראות"><svg width="16" height="16"><path d="M.5 .5H15.500V12.500H11L8 15.500V12.500H.5Z" fill="none" stroke="#fff" stroke-width="1.200" /></svg></button>
      <i class="peek"></i>
    </footer>
  </div>
</template>

<style>
body { margin: 0; }
</style>

<style scoped>
.window {
  height: 100vh;
  display: flex;
  flex-direction: column;
  font: 12px/16px "Open Sans", "Noto Sans", sans-serif;
  color: #111;
  background: #fff;
  overflow: hidden;
}
.window > * { flex: none; }
.defs { display: block; }
button { border: 0; padding: 0; background: none; font: inherit; color: inherit; flex: none; display: flex; align-items: center; justify-content: center; white-space: nowrap; }
svg { flex: none; display: block; }
a { color: inherit; text-decoration: none; white-space: nowrap; }
.grow { flex: 1; }
.ic16 { width: 16px; height: 16px; }
.ic32 { width: 32px; height: 32px; }
.latin { font-family: Roboto, "Open Sans", sans-serif; font-size: 12px; }

.titlebar { height: 23px; display: flex; justify-content: space-between; }
.quick { display: flex; align-items: center; gap: 8px; }
.bar { width: 1px; height: 12px; background: #999; }
.winctl { display: flex; gap: 1px; padding-left: 2px; }
.winctl button { width: 45px; height: 21px; }

.tabs { height: 24px; display: flex; border-bottom: 1px solid #dadbdc; box-sizing: border-box; color: #333; padding-left: 4px; }
.tab { width: 57px; height: 23px; }
.tab.file { width: 56px; background: #1979ca; color: #fff; }
.tab.home { width: 45px; height: 24px; background: #f5f6f7; border: 1px solid #dadbdc; border-bottom: 0; box-sizing: border-box; padding-bottom: 2px; margin-left: 2px; }
.mini { width: 14px; }
.mini + .mini { margin-right: 8px; }

.ribbon { height: 87px; display: flex; background: #f5f6f7; border-bottom: 1px solid #dadbdc; padding: 2px 0; }
.group { border-left: 1px solid #e2e3e4; display: flex; flex-direction: column; box-sizing: border-box; }
.g-clipboard { width: 259px; }
.g-organize { width: 187px; }
.g-new { width: 136px; }
.g-open { width: 127px; }
.g-select { width: 92px; }
.g-clipboard .cmds { padding-right: 6px; }
.g-organize .cmds { padding-right: 3px; }
.g-new .cmds { padding-right: 4px; }
.g-open .cmds { padding-right: 3px; }
.g-select .cmds { padding-right: 5px; }
.cmds { flex: 1; display: flex; align-items: flex-start; }
.big { width: 42px; flex-direction: column; padding-top: 5px; }
.big.wide { width: 62px; }
.g-open .big { width: 48px; }
.lines { margin-top: 3px; line-height: 13px; white-space: pre; }
.lines .caret { display: inline-block; vertical-align: middle; }
.off { color: #8b8b8b; }
.off .caret { color: #a5a5a5; }
.caret.gap { margin-right: 3px; }
.divider { width: 1px; height: 58px; background: #e0e1e2; margin: 4px 4px 0; }
.smalls { padding: 2px 2px 0 0; display: flex; flex-direction: column; }
.small { height: 22px; justify-content: flex-start; gap: 3px; }
.small .caret { margin-right: 1px; }
.gtitle { height: 15px; text-align: center; color: #5a5a5a; }

.addressrow { height: 34px; display: flex; align-items: center; padding: 0 14px 0 12px; box-sizing: border-box; font-size: 13px; }
.nb { width: 12px; height: 20px; }
.nb.fwd { margin-right: 17px; }
.nb.recent { width: 6px; margin: 0 15px 0 11px; }
.nb.up { margin-left: 7px; }
.address { flex: 1; height: 22px; border: 1px solid #d9d9d9; box-sizing: border-box; display: flex; align-items: center; padding-right: 2px; }
.address a { margin: 0 8px; }
.chev { fill: none; stroke: #666; stroke-width: 1.300; }
.address .ic16 { margin-left: 8px; }
.ab { width: 16px; height: 20px; }
.ab.refresh { border-right: 1px solid #d9d9d9; width: 17px; }
.search { width: 202px; height: 22px; border: 1px solid #d9d9d9; box-sizing: border-box; display: flex; align-items: center; margin-right: 12px; padding: 0 10px 0 8px; }
.search input { flex: 1; min-width: 0; border: 0; outline: 0; padding: 0; font: inherit; background: none; }
.search input::placeholder { color: #757575; opacity: 1; }

.toolbar { height: 31px; display: flex; align-items: center; border-bottom: 1px solid #dadada; box-sizing: border-box; padding-left: 4px; }
.tb { width: 32px; height: 29px; }
.tsep { width: 1px; height: 26px; background: #8a8a8a; margin: 0 2px 0 5px; }
.tarrow { width: 14px; height: 28px; margin-right: 4px; }
.tb.on { background: #cce8ff; border: 1px solid #99d1ff; box-sizing: border-box; margin-left: 3px; }

.window > .main { flex: 1 1 0; min-height: 0; display: flex; font-size: 13px; }
.tree { width: 139px; flex: none; overflow: hidden; padding-top: 16px; box-sizing: border-box; }
.node { width: 100%; height: 24px; justify-content: flex-start; gap: 5px; padding-right: 24px; }
.node .heb { padding-bottom: 2px; }
.node.lv0 { margin-top: 8px; }
.node.lv0:first-child { margin-top: 0; }
.node.lv1 { padding-right: 32px; }
.node.lv2 { padding-right: 40px; }
.node.sel { background: #d9d9d9; }
.scroll { width: 16px; flex: none; background: #f0f0f0; display: flex; flex-direction: column; }
.sarrow { height: 17px; display: flex; align-items: center; justify-content: center; }
.track { flex: 1; display: flex; justify-content: flex-end; }
.thumb { width: 15px; height: 92%; background: #cdcdcd; }
.content { flex: 1; border-right: 1px solid #f0f0f0; margin-right: 3px; padding-top: 14px; text-align: center; color: #6d6d6d; }

.info { height: 23px; display: flex; align-items: center; padding: 0 14px 0 8px; gap: 7px; color: #1e395b; }
.info button { padding-bottom: 2px; }
.count { border-left: 1px solid #ececec; padding-left: 10px; height: 16px; }
.status { height: 23px; box-sizing: border-box; display: flex; align-items: center; border-top: 1px solid #d9d9d9; background: #f0f0f0; padding-left: 2px; color: #000; }
.grip { width: 16px; height: 20px; border-left: 1px solid #d9d9d9; display: flex; align-items: flex-end; box-sizing: border-box; padding-right: 1px; }
.cell { height: 20px; border-left: 1px solid #d9d9d9; display: flex; align-items: center; box-sizing: border-box; gap: 5px; }
.cell.pc { width: 148px; justify-content: flex-end; padding-left: 4px; }
.cell.empty { width: 88px; }

.taskbar { height: 40px; display: flex; align-items: center; background: linear-gradient(90deg, #203b3a, #1b323a 20%, #1b2d3b 50%, #1f3a40 80%, #1c343a); color: #fff; padding-right: 2px; }
.start { width: 73px; height: 37px; background: #f0f0f0; border: 1px solid #fff; border-bottom-color: #555; border-left-color: #888; box-sizing: border-box; color: #000; font-weight: 700; gap: 4px; }
.apps { display: flex; height: 40px; margin-right: 6px; }
.app { width: 49px; height: 40px; }
.app.open { background: linear-gradient(#7798b8, #7798b8) center bottom / 40px 2px no-repeat; }
.app.active { background: linear-gradient(#7fa5c5, #7fa5c5) center bottom / 48px 2px no-repeat, linear-gradient(#25475f, #25475f) center / 45px 40px no-repeat; }
.tray { height: 40px; margin-left: 10px; }
.two { display: block; line-height: 18px; text-align: center; }
.lang { margin-left: 12px; }
.clock { margin-left: 15px; }
.lang { margin-left: 10px; }
.tray.note { margin-left: 20px; }
.peek { width: 1px; height: 40px; background: #78888a; margin-left: 4px; }
</style>
